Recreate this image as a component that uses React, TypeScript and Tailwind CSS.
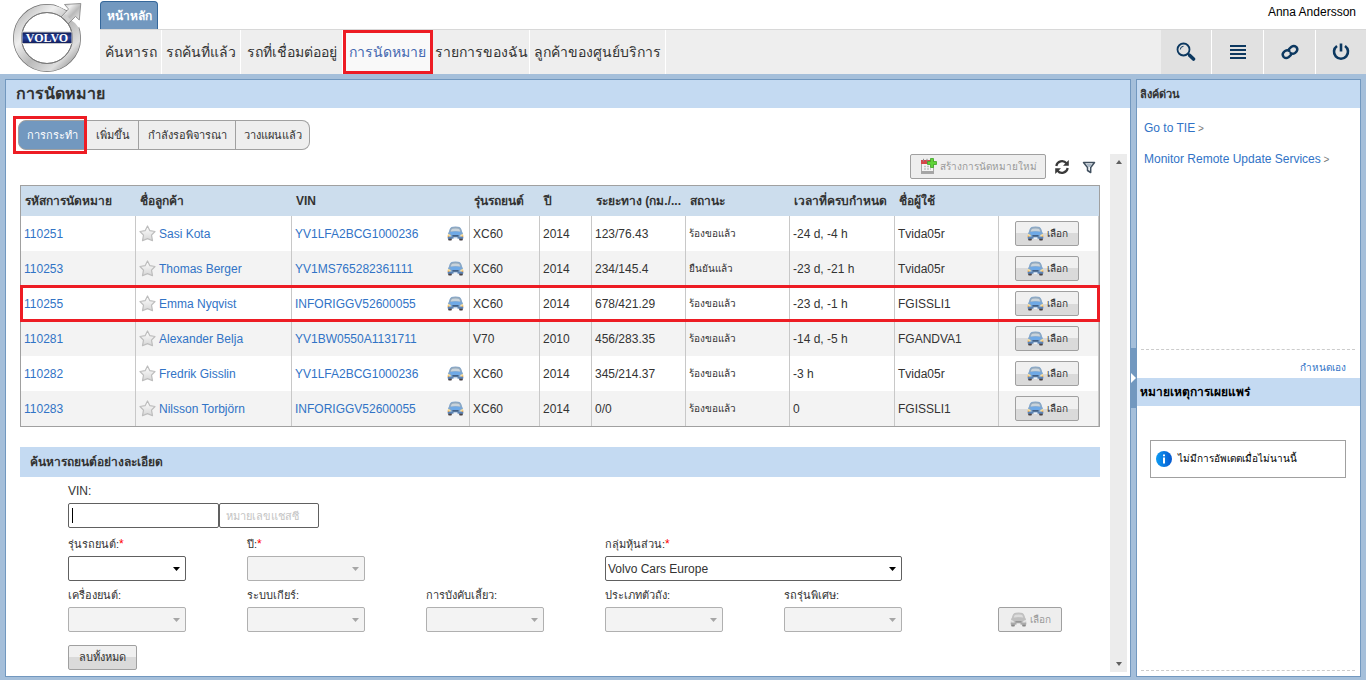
import { useState } from "react";
import type { ReactNode } from "react";
import clsx from "clsx";

interface Appointment {
    id: string;
    customer: string;
    vin: string;
    connected: boolean;
    model: string;
    year: string;
    mileage: string;
    status: string;
    due: string;
    user: string;
    marked?: boolean;
}

const appointments: Appointment[] = [
    { id: "110251", customer: "Sasi Kota", vin: "YV1LFA2BCG1000236", connected: true, model: "XC60", year: "2014", mileage: "123/76.43", status: "ร้องขอแล้ว", due: "-24 d, -4 h", user: "Tvida05r" },
    { id: "110253", customer: "Thomas Berger", vin: "YV1MS765282361111", connected: true, model: "XC60", year: "2014", mileage: "234/145.4", status: "ยืนยันแล้ว", due: "-23 d, -21 h", user: "Tvida05r" },
    { id: "110255", customer: "Emma Nyqvist", vin: "INFORIGGV52600055", connected: true, model: "XC60", year: "2014", mileage: "678/421.29", status: "ร้องขอแล้ว", due: "-23 d, -1 h", user: "FGISSLI1", marked: true },
    { id: "110281", customer: "Alexander Belja", vin: "YV1BW0550A1131711", connected: false, model: "V70", year: "2010", mileage: "456/283.35", status: "ร้องขอแล้ว", due: "-14 d, -5 h", user: "FGANDVA1" },
    { id: "110282", customer: "Fredrik Gisslin", vin: "YV1LFA2BCG1000236", connected: true, model: "XC60", year: "2014", mileage: "345/214.37", status: "ร้องขอแล้ว", due: "-3 h", user: "Tvida05r" },
    { id: "110283", customer: "Nilsson Torbjörn", vin: "INFORIGGV52600055", connected: true, model: "XC60", year: "2014", mileage: "0/0", status: "ร้องขอแล้ว", due: "0", user: "FGISSLI1" },
];

const columns = [
    { label: "รหัสการนัดหมาย", width: "w-[115px]" },
    { label: "ชื่อลูกค้า", width: "w-[156px]" },
    { label: "VIN", width: "w-[178px]" },
    { label: "รุ่นรถยนต์", width: "w-[70px]" },
    { label: "ปี", width: "w-[52px]" },
    { label: "ระยะทาง (กม./...", width: "w-[94px]" },
    { label: "สถานะ", width: "w-[104px]" },
    { label: "เวลาที่ครบกำหนด", width: "w-[105px]" },
    { label: "ชื่อผู้ใช้", width: "w-[104px]" },
    { label: "", width: "w-[100px]" },
];

const navItems = [
    { label: "ค้นหารถ", width: "w-[62px]" },
    { label: "รถค้นที่แล้ว", width: "w-[79px]" },
    { label: "รถที่เชื่อมต่ออยู่", width: "w-[102px]" },
    { label: "การนัดหมาย", width: "w-[90px]", active: true },
    { label: "รายการของฉัน", width: "w-[97px]" },
    { label: "ลูกค้าของศูนย์บริการ", width: "w-[136px]" },
];

const tabs = [
    { label: "การกระทำ", width: "w-[69px]" },
    { label: "เพิ่มขึ้น", width: "w-[52px]" },
    { label: "กำลังรอพิจารณา", width: "w-[97px]" },
    { label: "วางแผนแล้ว", width: "w-[74px]" },
];

function Logo() {
    return (
        <svg viewBox="0 0 72 72" className="size-[72px]" role="img" aria-label="Volvo">
            <defs>
                <linearGradient id="steel" x1="0" y1="0" x2="1" y2="1">
                    <stop offset="0" stopColor="#b4b4b4" />
                    <stop offset="0.3" stopColor="#efefef" />
                    <stop offset="0.55" stopColor="#b9b9b9" />
                    <stop offset="0.8" stopColor="#dedede" />
                    <stop offset="1" stopColor="#858585" />
                </linearGradient>
                <linearGradient id="band" x1="0" y1="0" x2="0" y2="1">
                    <stop offset="0" stopColor="#0d1a52" />
                    <stop offset="0.5" stopColor="#27429b" />
                    <stop offset="1" stopColor="#101c58" />
                </linearGradient>
            </defs>
            <circle cx="36" cy="37" r="29.500" fill="none" stroke="#6f6f6f" strokeWidth="9" />
            <circle cx="36" cy="37" r="29.500" fill="none" stroke="url(#steel)" strokeWidth="7.600" />
            <path d="M45 4 L70 3 L68 27 L64 22 L57 17 L60 10.500 L53 8 Z" fill="#fff" />
            <path d="M53.500 3.500 L69.800 2.500 L68.300 19 L64.500 15.500 L61 19 L57 23 L50 16 L57.500 8 Z" fill="url(#steel)" stroke="#808080" strokeWidth="0.800" />
            <circle cx="36" cy="37" r="25.500" fill="none" stroke="#7a7a7a" strokeWidth="1" />
            <path d="M51.500 15.500 L54 13 L59.500 18.500 L57 21.500 Z" fill="#cfcfcf" />
            <rect x="11" y="31" width="50" height="11.500" fill="url(#band)" stroke="#c8c8c8" strokeWidth="1" />
            <text x="36" y="40.500" textAnchor="middle" fontFamily="Liberation Serif, serif" fontWeight="700" fontSize="12" fill="#fff">VOLVO</text>
        </svg>
    );
}

function CarIcon({ muted = false }: { muted?: boolean }) {
    return (
        <svg viewBox="0 0 17 15" className={clsx("w-[17px] h-[15px] shrink-0", muted && "grayscale opacity-60")} aria-hidden="true">
            <rect x="1.200" y="11" width="3.600" height="3.600" rx="0.800" fill="#4a4346" />
            <rect x="12.200" y="11" width="3.600" height="3.600" rx="0.800" fill="#4a4346" />
            <path d="M1 9 Q0.700 7 2 5.500 Q2.800 1 6 0.800 Q8.500 0.300 11 0.800 Q14.200 1 15 5.500 Q16.300 7 16 9 L16.300 12.300 H0.700 Z" fill="#7fa6cf" />
            <path d="M2.500 5.500 Q3.200 1.500 6 1.200 Q8.500 0.800 11 1.200 Q13.800 1.500 14.500 5.500 Z" fill="#93a9bd" />
            <path d="M3.800 5.600 Q4.200 3 5.500 2.800 Q8.500 2.300 11.500 2.800 Q12.800 3 13.200 5.600 Q8.500 4.700 3.800 5.600 Z" fill="#c9d3db" />
            <path d="M3 6.200 Q8.500 5 14 6.200 L12.500 9 H4.500 Z" fill="#6fa9e6" />
            <path d="M0.900 7.800 L3.800 9 L3.600 10.600 L0.900 10 Z M16.100 7.800 L13.200 9 L13.400 10.600 L16.100 10 Z" fill="#f7dfa0" />
            <path d="M0.700 9.600 L2.200 10 V10.800 H0.700 Z M16.300 9.600 L14.800 10 V10.800 H16.300 Z" fill="#ef9d3a" />
            <rect x="5.300" y="9.200" width="6.400" height="1.400" rx="0.500" fill="#2f486d" />
            <path d="M0.800 11 H16.200 V12.600 H0.800 Z" fill="#5b83b5" />
            <rect x="6.500" y="11.300" width="4" height="1.700" fill="#eef3f8" />
        </svg>
    );
}

function StarIcon() {
    return (
        <svg viewBox="0 0 17 17" className="size-[17px] shrink-0" aria-hidden="true">
            <defs>
                <linearGradient id="star" x1="0" y1="0" x2="0" y2="1">
                    <stop offset="0" stopColor="#ffffff" />
                    <stop offset="1" stopColor="#d6d6d6" />
                </linearGradient>
            </defs>
            <path d="M8.500 1 L10.900 5.700 L16 6.500 L12.500 10.200 L13.500 15.700 L8.500 13.600 L3.500 15.700 L4.500 10.200 L1 6.500 L6.100 5.700 Z" fill="url(#star)" stroke="#bdbdbd" strokeWidth="1.200" strokeLinejoin="round" />
        </svg>
    );
}

function CalendarAddIcon() {
    return (
        <svg viewBox="0 0 17 17" className="size-[17px] shrink-0" aria-hidden="true">
            <rect x="1.500" y="5" width="12" height="10.500" fill="#f4f4f4" stroke="#a9a9a9" />
            <path d="M1 2 H14 V6 H1 Z" fill="#d5474a" />
            <path d="M3.500 0.800 V3.500 M7 0.800 V3.500" stroke="#8a8a8a" />
            <path d="M4 8.500 H11 M4 11 H11" stroke="#c4c4c4" strokeWidth="1.500" strokeDasharray="2 1" />
            <path d="M1 13 H14 V15.500 H1 Z" fill="#a5a5a5" />
            <path d="M10.500 0.500 H13.500 V3.500 H16.500 V6.500 H13.500 V9.500 H10.500 V6.500 H7.500 V3.500 H10.500 Z" fill="#5fd338" stroke="#3fa328" strokeWidth="0.800" />
        </svg>
    );
}

function SearchIcon() {
    return (
        <svg viewBox="0 0 20 20" className="size-5" fill="none" stroke="#0c3860" aria-hidden="true">
            <circle cx="7.500" cy="7.500" r="6" strokeWidth="1.800" />
            <path d="M4.300 7.500 A3.300 3.300 0 0 1 7.500 4.300" strokeWidth="1" />
            <path d="M12 11.500 L14 13.500" strokeWidth="2" />
            <path d="M13.800 13.500 L17.500 17" strokeWidth="3.600" strokeLinecap="round" />
        </svg>
    );
}

function MenuIcon() {
    return (
        <svg viewBox="0 0 20 20" className="size-5" fill="#0c3860" aria-hidden="true">
            <path d="M2 3 H18 V5 H2 Z M2 7 H18 V9 H2 Z M2 11 H18 V13 H2 Z M2 15 H18 V17 H2 Z" />
        </svg>
    );
}

function LinkIcon() {
    return (
        <svg viewBox="0 0 20 20" className="size-5" fill="none" stroke="#0c3860" strokeWidth="2.400" strokeLinecap="round" aria-hidden="true">
            <path d="M9 7.200 L11.500 4.700 Q14 3.200 16.200 4.900 Q18.300 7.200 16.600 9.400 L15 11 Q12.500 12.500 10.500 10.900" />
            <path d="M11 12.800 L8.500 15.300 Q6 16.800 3.800 15.100 Q1.700 12.800 3.400 10.600 L5 9 Q7.500 7.500 9.500 9.100" />
        </svg>
    );
}

function PowerIcon() {
    return (
        <svg viewBox="0 0 20 20" className="size-5" fill="none" stroke="#0c3860" strokeWidth="2.600" aria-hidden="true">
            <path d="M6 4 A7 7 0 1 0 14 4" />
            <path d="M10 1.500 V9.500" />
        </svg>
    );
}

function RefreshIcon() {
    return (
        <svg viewBox="0 0 16 16" className="size-4" fill="none" stroke="#3a3a3a" strokeWidth="2.200" aria-hidden="true">
            <path d="M2.300 7 A5.800 5.800 0 0 1 12.500 4.300" />
            <path d="M13.700 9 A5.800 5.800 0 0 1 3.500 11.700" />
            <path d="M14.800 1 V6.800 H9 Z M1.200 15 V9.200 H7 Z" fill="#3a3a3a" stroke="none" />
        </svg>
    );
}

function FilterIcon() {
    return (
        <svg viewBox="0 0 14 14" className="size-[14px]" aria-hidden="true">
            <path d="M1.500 2.500 H12.500 L8.700 7.500 V12.500 L5.500 10.500 V7.500 Z" fill="#f4f7fa" stroke="#41505f" strokeWidth="1.500" strokeLinejoin="round" />
            <path d="M4 4 H10 L8 7 H6.500 Z" fill="#a9b8c6" />
        </svg>
    );
}

function ActionButton({ children, disabled = false, className }: { children: ReactNode; disabled?: boolean; className?: string }) {
    return (
        <button
            type="button"
            disabled={disabled}
            className={clsx(
                "h-[25px] flex items-center justify-center gap-[3px] rounded-xs border border-[#a0a0a0] whitespace-nowrap",
                disabled ? "bg-[#eeeeee] text-[#999999]" : "bg-linear-to-b from-[#f0f0f0] from-50% to-[#dadada] to-50%",
                className
            )}
        >
            {children}
        </button>
    );
}

interface SelectFieldProps {
    id: string;
    label: string;
    required?: boolean;
    disabled?: boolean;
    value?: string;
    className?: string;
}

function SelectField({ id, label, required, disabled, value = "", className }: SelectFieldProps) {
    return (
        <div className={className}>
            <label htmlFor={id} className="block h-5 leading-5 text-[11px] whitespace-nowrap">
                {label}:{required && <span className="text-[#ff0000] text-xs">*</span>}
            </label>
            <div className="relative mt-[2px]">
                <select
                    id={id}
                    disabled={disabled}
                    defaultValue={value}
                    className={clsx(
                        "block w-full h-[25px] pl-[2px] rounded-xs border appearance-none opacity-100",
                        disabled ? "bg-[#f3f3f3] border-[#b0b0b0]" : "bg-white border-[#606060]"
                    )}
                >
                    <option value={value}>{value}</option>
                </select>
                <svg viewBox="0 0 7 4" className={clsx("absolute right-[6px] top-[11px] w-[7px] h-1 pointer-events-none", disabled ? "fill-[#a6a6a6]" : "fill-black")} aria-hidden="true">
                    <path d="M0 0 H7 L3.500 4 Z" />
                </svg>
            </div>
        </div>
    );
}

function Header() {
    return (
        <header className="flex bg-white">
            <div className="w-[100px] shrink-0 flex items-start pl-[11px] pt-px">
                <Logo />
            </div>
            <div className="flex-1">
                <div className="h-[29px] flex items-end justify-between">
                    <button type="button" className="h-7 w-[58px] rounded-t-sm border border-b-0 border-[#35679a] bg-[#7298bf] text-white font-bold text-xs">หน้าหลัก</button>
                    <span className="self-start pt-1 pr-[10px] text-black">Anna Andersson</span>
                </div>
                <div className="h-[45px] flex justify-between border-t border-[#d8d8d8] bg-[#eeeeee]">
                    <nav className="flex">
                        {navItems.map((item) => (
                            <a
                                key={item.label}
                                href="#"
                                className={clsx(
                                    "flex items-center justify-center border-r border-white text-sm whitespace-nowrap",
                                    item.width,
                                    item.active ? "bg-[#f9f9f9] text-[#4468b0] outline-[3px] outline-[#ed1c24] -outline-offset-3" : "text-[#333333]"
                                )}
                            >
                                {item.label}
                            </a>
                        ))}
                    </nav>
                    <div className="flex gap-px bg-white">
                        <button type="button" aria-label="ค้นหา" className="w-[50px] bg-[#e1e1e1] flex items-center justify-center"><SearchIcon /></button>
                        <button type="button" aria-label="เมนู" className="w-[51px] bg-[#e1e1e1] flex items-center justify-center"><MenuIcon /></button>
                        <button type="button" aria-label="ลิงค์" className="w-[51px] bg-[#e1e1e1] flex items-center justify-center"><LinkIcon /></button>
                        <button type="button" aria-label="ออกจากระบบ" className="w-[50px] bg-[#e1e1e1] flex items-center justify-center"><PowerIcon /></button>
                    </div>
                </div>
            </div>
        </header>
    );
}

function AppointmentTable() {
    return (
        <table className="w-full table-fixed border-separate border-spacing-0 border border-[#a0a0a0] text-left">
            <thead>
                <tr className="bg-[#ccdded]">
                    {columns.map((column, index) => (
                        <th key={index} className={clsx("h-[30px] pl-1 pr-0 py-0 text-xs font-bold whitespace-nowrap", column.width)}>{column.label}</th>
                    ))}
                </tr>
            </thead>
            <tbody>
                {appointments.map((row) => (
                    <tr
                        key={row.id}
                        className={clsx(
                            "even:bg-[#f3f3f3] *:border-r *:border-[#c8c8c8] *:h-[35px] *:py-0 *:pl-[3px] *:whitespace-nowrap",
                            row.marked && "outline-[3px] outline-[#ed1c24] -outline-offset-2"
                        )}
                    >
                        <td><a href="#" className="text-[#3173c6]">{row.id}</a></td>
                        <td>
                            <div className="flex items-center gap-[3px]">
                                <StarIcon />
                                <a href="#" className="text-[#3173c6]">{row.customer}</a>
                            </div>
                        </td>
                        <td>
                            <div className="flex items-center justify-between pr-[5px]">
                                <a href="#" className="text-[#3173c6]">{row.vin}</a>
                                {row.connected && <CarIcon />}
                            </div>
                        </td>
                        <td>{row.model}</td>
                        <td>{row.year}</td>
                        <td>{row.mileage}</td>
                        <td className="text-[10px]">{row.status}</td>
                        <td>{row.due}</td>
                        <td>{row.user}</td>
                        <td>
                            <ActionButton className="w-16 ml-[13px] text-[10px]"><CarIcon />เลือก</ActionButton>
                        </td>
                    </tr>
                ))}
            </tbody>
        </table>
    );
}

function VehicleSearch() {
    return (
        <section className="mt-5">
            <h2 className="h-[30px] leading-[30px] pl-[10px] bg-[#c4daf2] text-xs font-bold">ค้นหารถยนต์อย่างละเอียด</h2>
            <form className="pl-12 pt-1">
                <label htmlFor="vin" className="block h-5 leading-5">VIN:</label>
                <div className="flex pt-[2px]">
                    <div className="relative">
                        <input id="vin" className="block w-[151px] h-[25px] px-1 rounded-xs border border-[#606060] bg-white" />
                        <span className="absolute left-1 top-[5px] w-px h-[15px] bg-black" />
                    </div>
                    <input aria-label="หมายเลขแชสซี" placeholder="หมายเลขแชสซี" className="w-[100px] h-[25px] px-[6px] rounded-xs border border-[#606060] bg-white text-[11px] placeholder:text-[#c4c4c4]" />
                </div>
                <div className="grid grid-cols-[repeat(5,118px)] gap-x-[61px] pt-[6px]">
                    <SelectField id="model" label="รุ่นรถยนต์" required />
                    <SelectField id="year" label="ปี" required disabled />
                    <SelectField id="partner" label="กลุ่มหุ้นส่วน" required value="Volvo Cars Europe" className="col-start-4 col-span-2" />
                </div>
                <div className="flex items-end justify-between pt-1 pr-[38px]">
                    <div className="grid grid-cols-[repeat(5,118px)] gap-x-[61px]">
                        <SelectField id="engine" label="เครื่องยนต์" disabled />
                        <SelectField id="gearbox" label="ระบบเกียร์" disabled />
                        <SelectField id="steering" label="การบังคับเลี้ยว" disabled />
                        <SelectField id="body" label="ประเภทตัวถัง" disabled />
                        <SelectField id="special" label="รถรุ่นพิเศษ" disabled />
                    </div>
                    <ActionButton disabled className="w-16 text-[10px]"><CarIcon muted />เลือก</ActionButton>
                </div>
                <ActionButton className="w-[69px] mt-[13px] text-[11px]">ลบทั้งหมด</ActionButton>
            </form>
        </section>
    );
}

function SidePanel() {
    return (
        <aside className="w-[225px] shrink-0 flex flex-col border border-[#7298bf] bg-white">
            <h2 className="h-7 leading-7 pl-[3px] bg-[#c4daf2] text-[11px] font-bold">ลิงค์ด่วน</h2>
            <div className="h-[241px] px-[7px] pt-[10px] leading-[21px]">
                <p><a href="#" className="text-[#3173c6]">Go to TIE</a><span className="text-[10px] text-[#777777]"> &gt;</span></p>
                <p className="mt-[10px]"><a href="#" className="text-[#3173c6]">Monitor Remote Update Services</a><span className="text-[10px] text-[#777777]"> &gt;</span></p>
            </div>
            <div className="h-[29px] ml-1 mr-[5px] pr-[9px] flex items-center justify-end border-t border-dashed border-[#cccccc]">
                <a href="#" className="mt-2 text-[10px] text-[#3173c6]">กำหนดเอง</a>
            </div>
            <h2 className="h-7 leading-7 pl-[3px] bg-[#c4daf2] text-xs font-bold text-black">หมายเหตุการเผยแพร่</h2>
            <div className="flex-1 pl-[13px] pr-[14px] pt-[34px] mb-[5px]">
                <div className="h-[38px] flex items-center gap-[6px] px-[5px] border border-[#a0a0a0]">
                    <svg viewBox="0 0 16 16" className="size-4 shrink-0" aria-hidden="true">
                        <defs>
                            <linearGradient id="info" x1="0" y1="0" x2="1" y2="0">
                                <stop offset="0" stopColor="#0d9bf2" />
                                <stop offset="1" stopColor="#0658cf" />
                            </linearGradient>
                        </defs>
                        <circle cx="8" cy="8" r="8" fill="url(#info)" />
                        <path d="M7 6.500 H9 V12.500 H7 Z M7 3.500 H9 V5.300 H7 Z" fill="#fff" />
                    </svg>
                    <span className="text-[10px] text-black whitespace-nowrap">ไม่มีการอัพเดตเมื่อไม่นานนี้</span>
                </div>
            </div>
            <div className="ml-1 mr-[5px] mb-[5px] border-t border-dashed border-[#cccccc]" />
        </aside>
    );
}

export default function App() {
    const [activeTab, setActiveTab] = useState("การกระทำ");

    return (
        <div className="min-h-screen flex flex-col bg-[#a5bfda] text-xs text-[#333333] font-['Liberation_Sans','Noto_Sans',sans-serif]">
            <Header />
            <div className="flex-1 flex px-[5px] pt-[5px] pb-[3px]">
                <main className="flex-1 min-w-0 flex flex-col border border-[#7298bf] bg-white">
                    <h1 className="h-7 leading-7 pl-[10px] bg-[#c4daf2] text-base font-bold">การนัดหมาย</h1>
                    <div className="flex px-3 pt-3">
                        {tabs.map((tab) => (
                            <button
                                key={tab.label}
                                type="button"
                                onClick={() => setActiveTab(tab.label)}
                                className={clsx(
                                    "relative h-[30px] border border-l-0 border-[#a0a0a0] text-[11px] whitespace-nowrap first:rounded-l-lg first:border-l last:rounded-r-lg",
                                    tab.width,
                                    activeTab === tab.label ? "z-10 bg-[#7298bf] text-white" : "bg-[#eeeeee]"
                                )}
                            >
                                {tab.label}
                                {activeTab === tab.label && <span className="absolute -inset-y-[5px] -left-[6px] -right-px border-3 border-[#ed1c24]" />}
                            </button>
                        ))}
                    </div>
                    <div className="flex-1 flex mt-1 mb-1 pl-[14px] pr-[3px] gap-[10px]">
                        <div className="flex-1 min-w-0">
                            <div className="h-[31px] flex items-start justify-end gap-2 pr-1">
                                <ActionButton disabled className="w-[136px] text-[10px]"><CalendarAddIcon />สร้างการนัดหมายใหม่</ActionButton>
                                <button type="button" aria-label="รีเฟรช" className="h-[25px]"><RefreshIcon /></button>
                                <button type="button" aria-label="ตัวกรอง" className="h-[25px] ml-1"><FilterIcon /></button>
                            </div>
                            <AppointmentTable />
                            <VehicleSearch />
                        </div>
                        <div className="w-[17px] flex flex-col items-center justify-between py-[6px] bg-[#ececec]">
                            <svg viewBox="0 0 6 4" className="w-[6px] h-1" aria-hidden="true"><path d="M0 4 H6 L3 0 Z" fill="#606060" /></svg>
                            <svg viewBox="0 0 6 4" className="w-[6px] h-1" aria-hidden="true"><path d="M0 0 H6 L3 4 Z" fill="#606060" /></svg>
                        </div>
                    </div>
                </main>
                <div className="w-[5px] flex items-center">
                    <button type="button" aria-label="ย่อแผง" className="w-[5px] h-[60px] flex items-center bg-[#7298bf]">
                        <svg viewBox="0 0 5 10" className="w-[5px] h-[10px]" aria-hidden="true"><path d="M0 0 L5 5 L0 10 Z" fill="#fff" /></svg>
                    </button>
                </div>
                <SidePanel />
            </div>
        </div>
    );
}
